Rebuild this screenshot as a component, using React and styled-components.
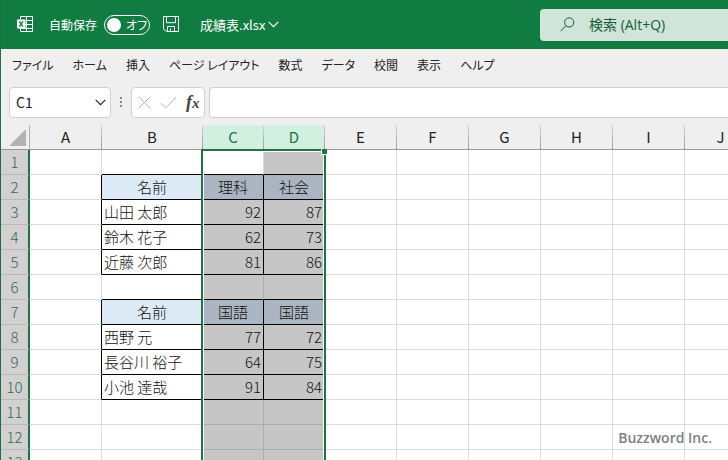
import React from "react";
import styled, { createGlobalStyle, css } from "styled-components";

const menus = [
  "ファイル",
  "ホーム",
  "挿入",
  "ページ レイアウト",
  "数式",
  "データ",
  "校閲",
  "表示",
  "ヘルプ",
];

const columns = [
  { name: "A", width: 72 },
  { name: "B", width: 101 },
  { name: "C", width: 61, selected: true },
  { name: "D", width: 61, selected: true },
  { name: "E", width: 72 },
  { name: "F", width: 72 },
  { name: "G", width: 72 },
  { name: "H", width: 72 },
  { name: "I", width: 72 },
  { name: "J", width: 72 },
];

const rowCount = 13;
const rowHeight = 25;

// row number -> values of the columns B, C and D
const data = {
  2: ["名前", "理科", "社会"],
  3: ["山田 太郎", 92, 87],
  4: ["鈴木 花子", 62, 73],
  5: ["近藤 次郎", 81, 86],
  7: ["名前", "国語", "国語"],
  8: ["西野 元", 77, 72],
  9: ["長谷川 裕子", 64, 75],
  10: ["小池 達哉", 91, 84],
};

const headingRows = [2, 7];

const TitleBar = () => (
  <StyledTitleBar>
    <QuickAccess>
      <svg width="17" height="17" viewBox="0 0 17 17" fill="none" stroke="#fff">
        <path d="M3.5 3.5V.5h12v15h-12v-3M9.5.5v15M9 4.5h6.5M8 8.5h7.5M3.5 12.5h12" />
        <path d="M0 3.5h8.5v9H0z" fill="#fff" stroke="none" />
        <path d="M2.3 5.4 6 10.7M6 5.4l-3.7 5.3" stroke="#107c41" strokeWidth="1.4" />
      </svg>
      <AutoSave>
        自動保存
        <Toggle>
          <input type="checkbox" role="switch" />
          <span>オフ</span>
        </Toggle>
      </AutoSave>
      <IconButton aria-label="上書き保存">
        <svg width="17" height="17" viewBox="0 0 17 17" fill="none" stroke="#fff">
          <path d="M.5.5h15v15H3.2L.5 12.8zM3.5.5v6.2h9V.5M4.5 15.5v-5h7v5M7.5 12.5v3" />
        </svg>
      </IconButton>
      <FileButton>
        成績表.xlsx
        <Chevron />
      </FileButton>
    </QuickAccess>
    <Search>
      <svg width="15" height="15" viewBox="0 0 15 15" fill="none" stroke="#185c37">
        <circle cx="9.2" cy="5.4" r="4.6" />
        <path d="M5.9 8.7.6 14.2" />
      </svg>
      <input type="search" aria-label="検索" placeholder="検索 (Alt+Q)" />
    </Search>
  </StyledTitleBar>
);

const Chevron = () => (
  <svg width="11" height="7" viewBox="0 0 11 7" fill="none" stroke="currentColor" strokeWidth="1.2">
    <path d="M.7.8l4.8 4.8L10.3.8" />
  </svg>
);

const FormulaBar = () => (
  <StyledFormulaBar>
    <NameBox>
      <input aria-label="名前ボックス" defaultValue="C1" />
      <button aria-label="名前の一覧">
        <Chevron />
      </button>
    </NameBox>
    <svg width="3" height="11" viewBox="0 0 3 11" fill="#888">
      <path d="M0 0h2v2H0zM0 4h2v2H0zM0 8h2v2H0z" />
    </svg>
    <FormulaActions>
      <button aria-label="キャンセル">
        <svg width="13" height="13" viewBox="0 0 13 13" fill="none" stroke="#b5b5b5">
          <path d="M.6.6l11.8 11.8M12.4.6.6 12.4" />
        </svg>
      </button>
      <button aria-label="入力">
        <svg width="17" height="13" viewBox="0 0 17 13" fill="none" stroke="#b5b5b5">
          <path d="M.6 7l5 5L16.3.8" />
        </svg>
      </button>
      <FxButton aria-label="関数の挿入">
        f<small>x</small>
      </FxButton>
    </FormulaActions>
    <FormulaInput aria-label="数式バー" />
  </StyledFormulaBar>
);

const Sheet = () => (
  <StyledSheet>
    <Grid>
      <colgroup>
        <Col $width={29} />
        {columns.map((column) => (
          <Col key={column.name} $width={column.width} />
        ))}
      </colgroup>
      <thead>
        <tr>
          <Corner>
            <svg width="17" height="17" viewBox="0 0 17 17" fill="#b2b2b2">
              <path d="M17 0v17H0z" />
            </svg>
          </Corner>
          {columns.map((column) => (
            <ColumnHeader key={column.name} scope="col" $selected={column.selected}>
              {column.name}
            </ColumnHeader>
          ))}
        </tr>
      </thead>
      <tbody>
        {Array.from({ length: rowCount }, (_, i) => (
          <Row key={i} number={i + 1} />
        ))}
      </tbody>
    </Grid>
  </StyledSheet>
);

const Row = ({ number }) => {
  const values = data[number];
  const heading = headingRows.includes(number);

  return (
    <tr>
      <RowHeader scope="row">{number}</RowHeader>
      {columns.map((column, i) => {
        const inTable = i >= 1 && i <= 3;
        const active = number === 1 && column.name === "C";
        return (
          <Cell
            key={column.name}
            $selected={column.selected && !active}
            $heading={heading && inTable}
            $number={Boolean(values) && !heading && i > 1}
            $rightLine={Boolean(values) && i <= 3}
            $bottomLine={inTable && Boolean(values || data[number + 1])}
          >
            {values && inTable ? values[i - 1] : null}
            {active && (
              <Selection>
                <FillHandle />
              </Selection>
            )}
          </Cell>
        );
      })}
    </tr>
  );
};

const App = () => {
  return (
    <>
      <GlobalStyle />
      <Window>
        <TitleBar />
        <MenuBar>
          {menus.map((menu) => (
            <button key={menu}>{menu}</button>
          ))}
        </MenuBar>
        <FormulaBar />
        <Sheet />
        <Watermark>Buzzword Inc.</Watermark>
      </Window>
    </>
  );
};

export default App;

const GlobalStyle = createGlobalStyle`
  * {
    box-sizing: border-box;
  }
  body {
    margin: 0;
    font-family: "Noto Sans CJK JP", sans-serif;
    color: #222;
  }
  button, input {
    font: inherit;
    color: inherit;
    margin: 0;
    padding: 0;
    border: none;
    background: none;
    outline: none;
  }
  svg {
    display: block;
    flex-shrink: 0;
  }
`;

const Window = styled.div`
  position: relative;
  display: flex;
  flex-direction: column;
  height: 100vh;
  overflow: hidden;
  background: #efefef;
  border-left: 1px solid #1e7145;
`;

const StyledTitleBar = styled.header`
  display: flex;
  align-items: center;
  justify-content: space-between;
  flex-shrink: 0;
  height: 49px;
  background: #107c41;
  color: #fff;
`;

const QuickAccess = styled.div`
  display: flex;
  align-items: center;
  padding-left: 16px;
  font-size: 12px;
  white-space: nowrap;
`;

const AutoSave = styled.label`
  display: flex;
  align-items: center;
  gap: 7px;
  margin-left: 15px;
`;

const Toggle = styled.span`
  display: flex;
  align-items: center;
  gap: 5px;
  width: 46px;
  height: 20px;
  padding-left: 2px;
  border: 1px solid #fff;
  border-radius: 10px;
  font-feature-settings: "palt";
  input {
    appearance: none;
    flex-shrink: 0;
    width: 14px;
    height: 14px;
    border-radius: 50%;
    background: #fff;
  }
`;

const IconButton = styled.button`
  margin-left: 13px;
`;

const FileButton = styled.button`
  display: flex;
  align-items: center;
  gap: 3px;
  margin-left: 20px;
  font-size: 13px;
`;

const Search = styled.label`
  display: flex;
  align-items: center;
  gap: 14px;
  width: 188px;
  height: 32px;
  padding-left: 20px;
  border-radius: 4px 0 0 4px;
  background: #cfe5d9;
  color: #185c37;
  font-family: "Open Sans", "Noto Sans CJK JP", sans-serif;
  font-size: 14px;
  input {
    flex: 1;
    min-width: 0;
  }
  input::placeholder {
    color: #185c37;
    opacity: 1;
  }
`;

const MenuBar = styled.nav`
  display: flex;
  align-items: center;
  flex-shrink: 0;
  gap: 19px;
  height: 30px;
  padding-left: 11px;
  font-size: 12px;
  font-feature-settings: "palt";
  white-space: nowrap;
`;

const StyledFormulaBar = styled.div`
  display: flex;
  align-items: center;
  flex-shrink: 0;
  height: 46px;
  padding-left: 8px;
`;

const box = css`
  height: 31px;
  border: 1px solid #d0d0d0;
  border-radius: 4px;
  background: #fff;
`;

const NameBox = styled.div`
  ${box}
  display: flex;
  align-items: center;
  width: 102px;
  margin-right: 9px;
  padding: 0 4px 0 6px;
  font-size: 14px;
  input {
    flex: 1;
    min-width: 0;
  }
`;

const FormulaActions = styled.div`
  ${box}
  display: flex;
  align-items: center;
  gap: 9px;
  width: 74px;
  margin: 0 4px 0 8px;
  padding-left: 6px;
`;

const FxButton = styled.button`
  font-family: "Liberation Serif", serif;
  font-size: 18px;
  font-style: italic;
  font-weight: bold;
  line-height: 20px;
  color: #444;
  small {
    font-size: 15px;
  }
`;

const FormulaInput = styled.input`
  && {
    ${box}
    flex: 1;
    min-width: 0;
    border-right: none;
    border-radius: 4px 0 0 4px;
    padding: 0 6px;
  }
`;

const StyledSheet = styled.main`
  flex: 1;
  min-height: 0;
  overflow: hidden;
  background: linear-gradient(#efefef 25px, #fff 25px);
`;

const Grid = styled.table`
  width: max-content;
  table-layout: fixed;
  border-spacing: 0;
  font-size: 15px;
  line-height: 24px;
  th,
  td {
    height: ${rowHeight}px;
    padding: 0;
    white-space: nowrap;
  }
`;

const Col = styled.col`
  width: ${(props) => props.$width}px;
`;

const Corner = styled.td`
  border-right: 1px solid #b0b0b0;
  border-bottom: 1px solid #999;
  svg {
    margin-left: 8px;
  }
`;

const ColumnHeader = styled.th`
  border-right: 1px solid;
  border-image: linear-gradient(#d8d8d8, #999) 1;
  border-bottom: 1px solid #999;
  background: ${(props) => (props.$selected ? "#d2f0e0" : "#efefef")};
  color: ${(props) => (props.$selected ? "#217346" : "#222")};
  font-weight: 400;
`;

const RowHeader = styled.th`
  border-right: 2px solid #217346;
  border-bottom: 1px solid #b8b8b8;
  background: #d2d0d0;
  color: #2c6e4b;
  font-weight: 300;
`;

const cellFill = ({ $selected, $heading }) => {
  if ($heading) return $selected ? "#abb5c1" : "#ddebf7";
  return $selected ? "#c6c6c6" : "#fff";
};

const Cell = styled.td`
  position: relative;
  border-style: solid;
  border-width: 0 1px 1px 0;
  border-right-color: ${(props) =>
    props.$rightLine ? "#000" : props.$selected ? "#acacac" : "#dcdcdc"};
  border-bottom-color: ${(props) =>
    props.$bottomLine ? "#000" : props.$selected ? "#acacac" : "#dcdcdc"};
  background: ${cellFill};
  color: #111;
  text-align: ${(props) =>
    props.$heading ? "center" : props.$number ? "right" : "left"};
  font-weight: 300;
  text-indent: ${(props) => (props.$heading || props.$number ? "0" : "2px")};
  && {
    padding-right: ${(props) => (props.$number ? "2px" : "0")};
  }
`;

// frame of the selected columns, drawn over the cells from the active one
const Selection = styled.div`
  position: absolute;
  z-index: 1;
  top: -1px;
  left: -2px;
  width: 125px;
  height: ${rowCount * rowHeight + 4}px;
  border: 2px solid #217346;
  box-shadow: inset 0 0 0 1px #fff;
  pointer-events: none;
`;

const FillHandle = styled.span`
  position: absolute;
  top: -2px;
  right: -3px;
  width: 6px;
  height: 6px;
  border: solid #fff;
  border-width: 0 0 1px 1px;
  background: #217346;
`;

const Watermark = styled.div`
  position: absolute;
  right: 16px;
  bottom: 13px;
  font-family: "Open Sans", sans-serif;
  font-size: 14px;
  font-weight: 600;
  line-height: 18px;
  color: #808080;
`;
